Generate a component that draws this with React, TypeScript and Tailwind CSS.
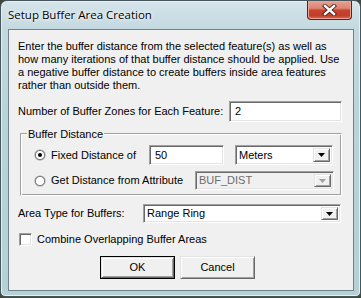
import React from "react";

const sunken =
  "border border-t-[#a0a0a0] border-l-[#a0a0a0] border-b-white border-r-white shadow-[inset_1px_1px_0_#696969,inset_-1px_-1px_0_#e3e3e3]";
const raised =
  "border border-t-[#e3e3e3] border-l-[#e3e3e3] border-b-[#696969] border-r-[#696969] shadow-[inset_1px_1px_0_#ffffff,inset_-1px_-1px_0_#a0a0a0]";

function Arrow({ disabled }: { disabled?: boolean }) {
  return (
    <div className={`w-[17px] h-full bg-[#f0f0f0] flex items-center justify-center ${raised}`}>
      <svg width="7" height="4" viewBox="0 0 7 4">
        <polygon points="0,0 7,0 3.5,4" fill={disabled ? "#a0a0a0" : "#000"} />
      </svg>
    </div>
  );
}

function Radio({ checked }: { checked?: boolean }) {
  return (
    <svg width="12" height="12" viewBox="0 0 12 12" className="shrink-0">
      <circle cx="6" cy="6" r="5.6" fill="#a0a0a0" />
      <circle cx="6" cy="6" r="4.6" fill="#fff" stroke="#696969" strokeWidth="0.8" />
      {checked && <circle cx="6" cy="6" r="2" fill="#000" />}
    </svg>
  );
}

export default function App() {
  return (
    <div
      className="w-[361px] h-[298px] bg-[#3e4a3c] text-[11px] text-black"
      style={{ fontFamily: '"Liberation Sans", Arial, sans-serif' }}
    >
      <div className="relative w-[361px] h-[297px] rounded-t-[7px] rounded-b-[5px] border border-[#47565c] bg-[linear-gradient(180deg,#d4e4ea_0%,#c3d8df_10%,#b9d3d8_40%,#b5d1d5_100%)] shadow-[inset_0_0_0_1px_#e6f0f2]">
        <div className="h-[28px] flex items-center pl-[7px]">
          <span
            className="text-[11.5px] text-black [text-shadow:0_0_6px_#ffffff,0_0_3px_#ffffff]"
            style={{ fontFamily: '"Open Sans", "Noto Sans", sans-serif' }}
          >
            Setup Buffer Area Creation
          </span>
        </div>
        <div className="absolute right-[8px] top-0 w-[45px] h-[19px] rounded-b-[4px] border border-t-0 border-[#5e2018] bg-[linear-gradient(180deg,#e7a190_0%,#dc8572_40%,#c9432f_52%,#c23d2b_80%,#d86a55_100%)] shadow-[inset_0_0_0_1px_#eea595] flex items-center justify-center">
          <svg width="15" height="12" viewBox="0 0 15 12">
            <path d="M3 2 L12 10 M12 2 L3 10" stroke="#4a1e18" strokeWidth="4.2" strokeLinecap="square" />
            <path d="M3 2 L12 10 M12 2 L3 10" stroke="#ffffff" strokeWidth="2.4" strokeLinecap="square" />
          </svg>
        </div>
        <div className="ml-[7px] w-[346px] h-[262px] border border-[#6f8289] bg-[#f0f0f0] pl-[9px] pt-[10px]">
          <p className="leading-[13px] w-[330px]">
            Enter the buffer distance from the selected feature(s) as well as how many iterations of that buffer distance should be applied. Use a negative buffer distance to create buffers inside area features rather than outside them.
          </p>
          <div className="mt-[9px] flex items-center h-[21px]">
            <span className="w-[211px]">Number of Buffer Zones for Each Feature:</span>
            <div className={`w-[113px] h-[21px] bg-white pl-[5px] flex items-center ${sunken}`}>2</div>
          </div>
          <div className="relative mt-[11px] ml-[2px] w-[322px] h-[63px] border border-t-[#a0a0a0] border-l-[#a0a0a0] border-b-white border-r-white shadow-[inset_1px_1px_0_#ffffff,inset_-1px_-1px_0_#a0a0a0]">
            <span className="absolute left-[6px] top-[-8px] bg-[#f0f0f0] px-[1px]">Buffer Distance</span>
            <div className="mt-[11px] flex items-center h-[20px]">
              <div className="ml-[13px] w-[115px] flex items-center gap-[5px]">
                <Radio checked />
                <span>Fixed Distance of</span>
              </div>
              <div className={`w-[75px] h-[20px] bg-white pl-[5px] flex items-center ${sunken}`}>50</div>
              <div className={`ml-[11px] w-[98px] h-[20px] bg-white flex items-center ${sunken} p-[2px]`}>
                <span className="flex-1 pl-[1px]">Meters</span>
                <Arrow />
              </div>
            </div>
            <div className="mt-[6px] flex items-center h-[19px]">
              <div className="ml-[13px] w-[161px] flex items-center gap-[5px]">
                <Radio />
                <span>Get Distance from Attribute</span>
              </div>
              <div className={`w-[139px] h-[19px] bg-[#f0f0f0] flex items-center ${sunken} p-[2px]`}>
                <span className="flex-1 pl-[1px] text-[#6d6d6d]">BUF_DIST</span>
                <Arrow disabled />
              </div>
            </div>
          </div>
          <div className="mt-[8px] flex items-center h-[19px]">
            <span className="w-[125px]">Area Type for Buffers:</span>
            <div className={`w-[198px] h-[19px] bg-white flex items-center ${sunken} p-[2px]`}>
              <span className="flex-1 pl-[1px]">Range Ring</span>
              <Arrow />
            </div>
          </div>
          <div className="mt-[10px] flex items-center h-[13px] gap-[5px] ml-[1px]">
            <div className={`w-[13px] h-[13px] bg-white ${sunken}`} />
            <span>Combine Overlapping Buffer Areas</span>
          </div>
          <div className="mt-[10px] ml-[82px] flex gap-[5px]">
            <div className="w-[75px] h-[23px] border border-black">
              <div className={`w-full h-full bg-[#f0f0f0] flex items-center justify-center ${raised}`}>OK</div>
            </div>
            <div className={`w-[75px] h-[23px] bg-[#f0f0f0] flex items-center justify-center ${raised}`}>Cancel</div>
          </div>
        </div>
      </div>
    </div>
  );
}
